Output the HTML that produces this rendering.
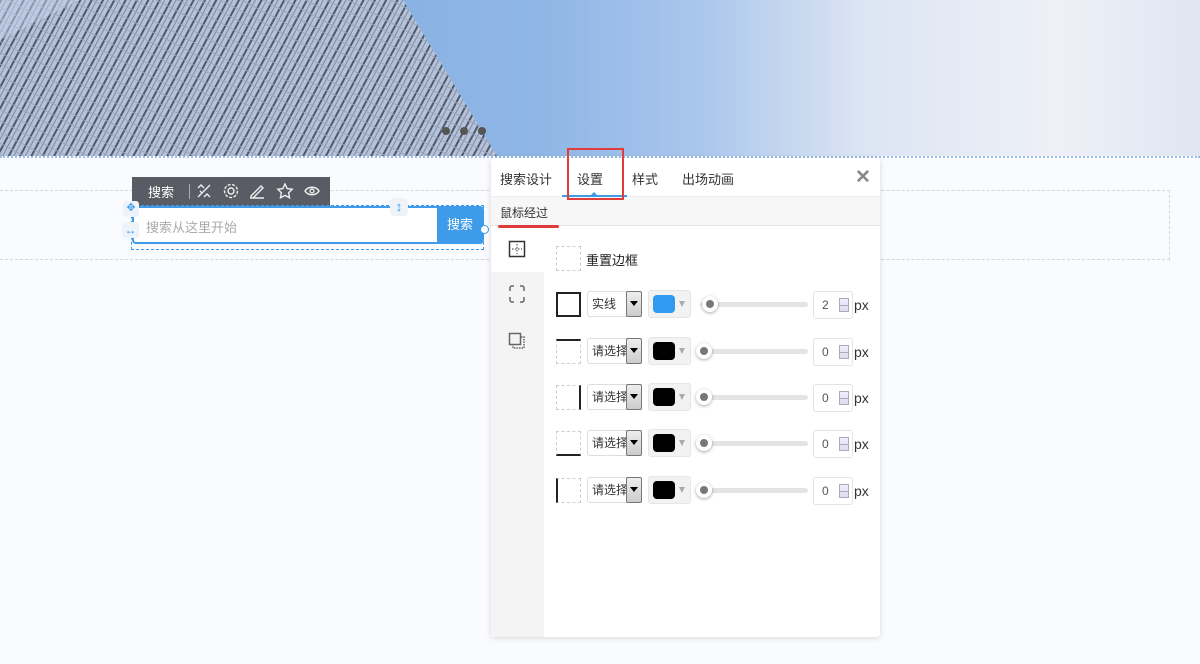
<!DOCTYPE html>
<html><head><meta charset="utf-8"><style>
*{box-sizing:border-box;margin:0;padding:0}
body{width:1200px;height:664px;overflow:hidden;background:#fafbfe;font-family:"Liberation Sans","Noto Sans CJK SC",sans-serif;position:relative;font-size:12px;color:#333}
.abs{position:absolute}
.hero{left:0;top:0;width:1200px;height:156px;background:linear-gradient(90deg,#7aa7de 0%,#8fb6e6 45%,#a9c5ec 58%,#dce5f3 72%,#eef0f6 88%,#dfe6f2 100%)}
.row .ic{position:absolute;left:556px;width:25px;height:25px;border:1px dashed #ccc}
.sel{position:absolute;left:587px;width:55px;height:26px;border:1px solid #ddd;background:#fff;border-radius:3px;font-size:12px;line-height:24px;padding-left:4px;color:#333}
.sel b{position:absolute;right:-1px;top:-1px;width:16px;height:26px;border:1px solid #777;background:linear-gradient(#eee,#ccc);border-radius:2px}
.sel b:after{content:"";position:absolute;left:3px;top:9px;border:4px solid transparent;border-top:5px solid #000}
.col{position:absolute;left:648px;width:43px;height:28px;background:#f2f2f2;border:1px solid #e6e6e6;border-radius:3px}
.col i{position:absolute;left:4px;top:4px;width:22px;height:18px;border-radius:4px;background:#000}
.col:after{content:"";position:absolute;left:30px;top:10px;border:3px solid transparent;border-top:6px solid #aaa}
.sl{position:absolute;left:700px;width:108px;height:5px;background:#e4e4e4;border-radius:3px}
.sl i{position:absolute;left:-4px;top:-6px;width:16px;height:16px;border-radius:50%;background:#fff;box-shadow:0 1px 3px rgba(0,0,0,.35)}
.sl i:after{content:"";position:absolute;left:4px;top:4px;width:8px;height:8px;border-radius:50%;background:#777}
.num{position:absolute;left:813px;width:40px;height:28px;border:1px solid #e4e4e4;border-radius:3px;background:#fff;line-height:26px;padding-left:8px;color:#555}
.num b{position:absolute;right:3px;top:6px;width:10px;height:14px;border:1px solid #aab;background:linear-gradient(#eef,#dde)}
.num b:after{content:"";position:absolute;left:0;top:6px;width:8px;height:1px;background:#aab}
.px{position:absolute;left:854px;font-size:14px;color:#333}
</style></head><body>
<div class="abs hero"></div>
<svg class="abs" style="left:0;top:0" width="520" height="156">
<defs><pattern id="p" width="10" height="10" patternUnits="userSpaceOnUse" patternTransform="rotate(28)"><rect width="10" height="10" fill="#b4c3da"/><rect width="2" height="10" fill="#4f586c"/><rect x="5" width="1" height="10" fill="#7f8aa0"/><rect y="6" width="10" height="1" fill="#9aa6bb"/></pattern></defs>
<polygon points="0,0 403,0 497,156 0,156" fill="url(#p)"/>
<polygon points="0,0 80,0 0,40" fill="#c3d2ea" opacity=".5"/>
<circle cx="446" cy="131" r="4" fill="#555"/><circle cx="464" cy="131" r="4" fill="#555"/><circle cx="482" cy="131" r="4" fill="#555"/>
</svg>
<div class="abs" style="left:0;top:156px;width:1200px;border-top:2px dotted #9cc0e6"></div>
<div class="abs" style="left:0;top:190px;width:1170px;height:70px;border:1px dashed #cfd6de;border-left:none"></div>
<!-- toolbar -->
<div class="abs" style="left:132px;top:177px;width:198px;height:29px;background:#595c64"></div>
<div class="abs" style="left:148px;top:182px;color:#fff;font-size:13px">搜索</div>
<div class="abs" style="left:189px;top:184px;width:1px;height:15px;background:#aaa"></div>
<svg class="abs" style="left:195px;top:182px" width="130" height="18" fill="none" stroke="#eee" stroke-width="1.4">
<path d="M3 15L15 3M3 6l3-3 3 3M9 15l3-3 3 3M5 9l2 2"/>
<circle cx="36" cy="9" r="3"/><circle cx="36" cy="9" r="6.5" stroke-dasharray="3 1.5"/>
<path d="M56 14L66 4l2 2-10 10h-2zM55 16h14"/>
<path d="M90 2l2.2 4.6 5 .7-3.6 3.5.9 5-4.5-2.4-4.5 2.4.9-5-3.6-3.5 5-.7z"/>
<path d="M110 9c3-5 11-5 14 0-3 5-11 5-14 0z"/><circle cx="117" cy="9" r="2"/>
</svg>
<!-- search box -->
<div class="abs" style="left:132px;top:206px;width:352px;height:38px;border:2px solid #3d9be9;border-radius:4px;background:#fff"></div>
<div class="abs" style="left:131px;top:205px;width:353px;height:45px;border:1px dashed #3d9be9"></div>
<div class="abs" style="left:146px;top:217px;color:#aaa;font-size:13px">搜索从这里开始</div>
<div class="abs" style="left:437px;top:207px;width:46px;height:36px;background:#3d9be9;border-radius:0 3px 3px 0;color:#fff;font-size:13px;text-align:center;line-height:36px">搜索</div>
<div class="abs" style="left:480px;top:225px;width:9px;height:9px;border-radius:50%;border:1.5px solid #3d9be9;background:#fff"></div>
<div class="abs" style="left:123px;top:201px;width:16px;height:16px;border-radius:3px;background:#eef3fa;color:#3d9be9;font-size:11px;text-align:center">✥</div>
<div class="abs" style="left:122px;top:222px;width:17px;height:16px;border-radius:3px;background:#eef3fa;color:#3d9be9;font-size:12px;text-align:center;line-height:16px">↔</div>
<div class="abs" style="left:390px;top:198px;width:18px;height:18px;border-radius:4px;background:#eef3fa;color:#3d9be9;font-size:13px;text-align:center;line-height:18px">↕</div>
<!-- panel -->
<div class="abs" style="left:491px;top:158px;width:389px;height:479px;background:#fff;border-radius:3px;box-shadow:0 1px 6px rgba(0,0,0,.15)"></div>
<div class="abs" style="left:491px;top:196px;width:389px;height:30px;background:#f7f7f7;border-top:1px solid #eee;border-bottom:1px solid #e6e6e6"></div>
<div class="abs" style="left:491px;top:226px;width:53px;height:411px;background:#f4f4f4"></div>
<div class="abs" style="left:491px;top:226px;width:53px;height:46px;background:#fff"></div>
<div class="abs" style="left:500px;top:169px;font-size:13px">搜索设计</div>
<div class="abs" style="left:577px;top:169px;font-size:13px">设置</div>
<div class="abs" style="left:632px;top:169px;font-size:13px">样式</div>
<div class="abs" style="left:682px;top:169px;font-size:13px">出场动画</div>
<div class="abs" style="left:562px;top:195px;width:65px;height:2px;background:#3d9be9"></div>
<div class="abs" style="left:589px;top:187px;border:5px solid transparent;border-bottom:5px solid #3d9be9"></div>
<div class="abs" style="left:567px;top:148px;width:57px;height:52px;border:2px solid #e23b3b"></div>
<div class="abs" style="left:855px;top:166px;font-size:19px;color:#888;font-weight:bold">✕</div>
<div class="abs" style="left:500px;top:204px;font-size:12px;color:#333">鼠标经过</div>
<div class="abs" style="left:498px;top:225px;width:61px;height:3px;background:#e23b3b;border-radius:2px"></div>
<svg class="abs" style="left:508px;top:240px" width="20" height="110" fill="none" stroke="#333">
<rect x="1.5" y="1.5" width="15" height="15" stroke-width="1.5"/><path d="M9 4v10M4 9h10" stroke-dasharray="1.5 1.5"/>
<path d="M2 51v-3a2 2 0 0 1 2-2h2M12 46h2a2 2 0 0 1 2 2v3M16 57v3a2 2 0 0 1-2 2h-2M6 62H4a2 2 0 0 1-2-2v-3" stroke="#666" stroke-width="1.5"/>
<rect x="1.5" y="93.5" width="11" height="11" stroke="#666" stroke-width="1.5"/><path d="M13 97h3v11H5v-3" stroke="#666" stroke-dasharray="1.5 1" stroke-width="1.5"/>
</svg>
<div class="abs" style="left:556px;top:246px;width:25px;height:25px;border:1px dashed #ccc"></div>
<div class="abs" style="left:586px;top:250px;font-size:13px;color:#222">重置边框</div>
<div class="row">
<div class="ic" style="top:292px;border:2px solid #222"></div>
<div class="sel" style="top:291px">实线<b></b></div>
<div class="col" style="top:290px"><i style="background:#2f9af0"></i></div>
<div class="sl" style="top:302px"><i style="left:2px"></i></div>
<div class="num" style="top:291px">2<b></b></div><div class="px" style="top:297px">px</div>

<div class="ic" style="top:339px;border-top:2px solid #222"></div>
<div class="sel" style="top:338px">请选择<b></b></div>
<div class="col" style="top:337px"><i></i></div>
<div class="sl" style="top:349px"><i></i></div>
<div class="num" style="top:338px">0<b></b></div><div class="px" style="top:344px">px</div>

<div class="ic" style="top:385px;border-right:2px solid #222"></div>
<div class="sel" style="top:384px">请选择<b></b></div>
<div class="col" style="top:383px"><i></i></div>
<div class="sl" style="top:395px"><i></i></div>
<div class="num" style="top:384px">0<b></b></div><div class="px" style="top:390px">px</div>

<div class="ic" style="top:431px;border-bottom:2px solid #222"></div>
<div class="sel" style="top:430px">请选择<b></b></div>
<div class="col" style="top:429px"><i></i></div>
<div class="sl" style="top:441px"><i></i></div>
<div class="num" style="top:430px">0<b></b></div><div class="px" style="top:436px">px</div>

<div class="ic" style="top:478px;border-left:2px solid #222"></div>
<div class="sel" style="top:477px">请选择<b></b></div>
<div class="col" style="top:476px"><i></i></div>
<div class="sl" style="top:488px"><i></i></div>
<div class="num" style="top:477px">0<b></b></div><div class="px" style="top:483px">px</div>
</div>
</body></html>
